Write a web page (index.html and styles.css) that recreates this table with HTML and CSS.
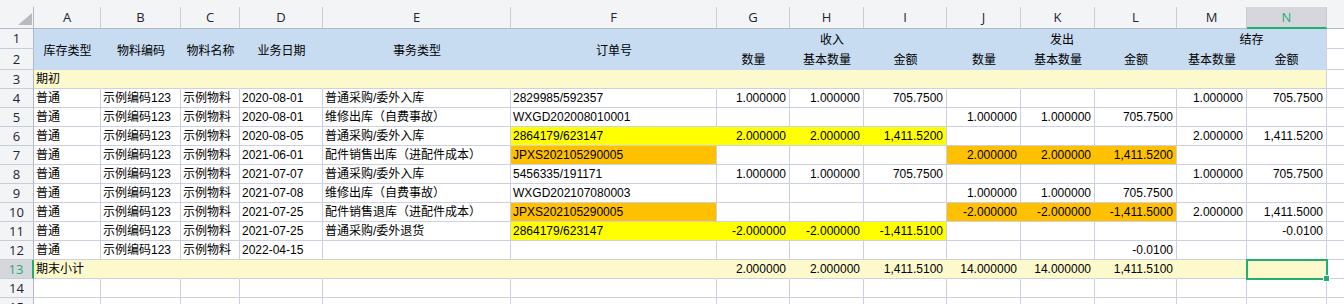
FILE: index.html
```html
<!DOCTYPE html>
<html lang="zh-CN">
<head>
<meta charset="utf-8">
<title>Sheet</title>
<link rel="stylesheet" href="styles.css">
</head>
<body>
<div class="sheet">
  <div class="colhdr">
    <div class="corner"><span class="tri"></span></div>
    <div class="ch a">A</div><div class="ch b">B</div><div class="ch c">C</div><div class="ch d">D</div><div class="ch e">E</div><div class="ch f">F</div><div class="ch g">G</div><div class="ch h">H</div><div class="ch i">I</div><div class="ch j">J</div><div class="ch k">K</div><div class="ch l">L</div><div class="ch m">M</div><div class="ch n sel">N</div><div class="ch o blank"></div>
  </div>

  <div class="hblock">
    <div class="rhstack"><div class="rh r1">1</div><div class="rh r2">2</div></div>
    <div class="hc a">库存类型</div>
    <div class="hc b">物料编码</div>
    <div class="hc c">物料名称</div>
    <div class="hc d">业务日期</div>
    <div class="hc e">事务类型</div>
    <div class="hc f">订单号</div>
    <div class="grp ghi">
      <div class="gt">收入</div>
      <div class="gs"><div class="sc g">数量</div><div class="sc h">基本数量</div><div class="sc i">金额</div></div>
    </div>
    <div class="grp gjl">
      <div class="gt">发出</div>
      <div class="gs"><div class="sc j">数量</div><div class="sc k">基本数量</div><div class="sc l">金额</div></div>
    </div>
    <div class="grp gmn">
      <div class="gt">结存</div>
      <div class="gs"><div class="sc m">基本数量</div><div class="sc n">金额</div></div>
    </div>
    <div class="ostack"><div class="o1"></div><div class="o2"></div></div>
  </div>

  <div class="row">
    <div class="rh">3</div>
    <div class="cell a yl nr">期初</div><div class="cell b yl nr"></div><div class="cell c yl nr"></div><div class="cell d yl nr"></div><div class="cell e yl nr"></div><div class="cell f yl nr"></div><div class="cell g yl nr"></div><div class="cell h yl nr"></div><div class="cell i yl nr"></div><div class="cell j yl nr"></div><div class="cell k yl nr"></div><div class="cell l yl nr"></div><div class="cell m yl nr"></div><div class="cell n yl"></div><div class="cell o"></div>
  </div>

  <div class="row">
    <div class="rh">4</div>
    <div class="cell a">普通</div><div class="cell b">示例编码123</div><div class="cell c">示例物料</div><div class="cell d">2020-08-01</div><div class="cell e">普通采购/委外入库</div><div class="cell f">2829985/592357</div>
    <div class="cell g num">1.000000</div><div class="cell h num">1.000000</div><div class="cell i num">705.7500</div><div class="cell j num"></div><div class="cell k num"></div><div class="cell l num"></div><div class="cell m num">1.000000</div><div class="cell n num">705.7500</div><div class="cell o"></div>
  </div>

  <div class="row">
    <div class="rh">5</div>
    <div class="cell a">普通</div><div class="cell b">示例编码123</div><div class="cell c">示例物料</div><div class="cell d">2020-08-01</div><div class="cell e">维修出库（自费事故）</div><div class="cell f">WXGD202008010001</div>
    <div class="cell g num"></div><div class="cell h num"></div><div class="cell i num"></div><div class="cell j num">1.000000</div><div class="cell k num">1.000000</div><div class="cell l num">705.7500</div><div class="cell m num"></div><div class="cell n num"></div><div class="cell o"></div>
  </div>

  <div class="row">
    <div class="rh">6</div>
    <div class="cell a">普通</div><div class="cell b">示例编码123</div><div class="cell c">示例物料</div><div class="cell d">2020-08-05</div><div class="cell e">普通采购/委外入库</div><div class="cell f ye nr">2864179/623147</div>
    <div class="cell g num ye nr">2.000000</div><div class="cell h num ye nr">2.000000</div><div class="cell i num ye">1,411.5200</div><div class="cell j num"></div><div class="cell k num"></div><div class="cell l num"></div><div class="cell m num">2.000000</div><div class="cell n num">1,411.5200</div><div class="cell o"></div>
  </div>

  <div class="row">
    <div class="rh">7</div>
    <div class="cell a">普通</div><div class="cell b">示例编码123</div><div class="cell c">示例物料</div><div class="cell d">2021-06-01</div><div class="cell e">配件销售出库（进配件成本）</div><div class="cell f or">JPXS202105290005</div>
    <div class="cell g num"></div><div class="cell h num"></div><div class="cell i num"></div><div class="cell j num or nr">2.000000</div><div class="cell k num or nr">2.000000</div><div class="cell l num or">1,411.5200</div><div class="cell m num"></div><div class="cell n num"></div><div class="cell o"></div>
  </div>

  <div class="row">
    <div class="rh">8</div>
    <div class="cell a">普通</div><div class="cell b">示例编码123</div><div class="cell c">示例物料</div><div class="cell d">2021-07-07</div><div class="cell e">普通采购/委外入库</div><div class="cell f">5456335/191171</div>
    <div class="cell g num">1.000000</div><div class="cell h num">1.000000</div><div class="cell i num">705.7500</div><div class="cell j num"></div><div class="cell k num"></div><div class="cell l num"></div><div class="cell m num">1.000000</div><div class="cell n num">705.7500</div><div class="cell o"></div>
  </div>

  <div class="row">
    <div class="rh">9</div>
    <div class="cell a">普通</div><div class="cell b">示例编码123</div><div class="cell c">示例物料</div><div class="cell d">2021-07-08</div><div class="cell e">维修出库（自费事故）</div><div class="cell f">WXGD202107080003</div>
    <div class="cell g num"></div><div class="cell h num"></div><div class="cell i num"></div><div class="cell j num">1.000000</div><div class="cell k num">1.000000</div><div class="cell l num">705.7500</div><div class="cell m num"></div><div class="cell n num"></div><div class="cell o"></div>
  </div>

  <div class="row">
    <div class="rh">10</div>
    <div class="cell a">普通</div><div class="cell b">示例编码123</div><div class="cell c">示例物料</div><div class="cell d">2021-07-25</div><div class="cell e">配件销售退库（进配件成本）</div><div class="cell f or">JPXS202105290005</div>
    <div class="cell g num"></div><div class="cell h num"></div><div class="cell i num"></div><div class="cell j num or nr">-2.000000</div><div class="cell k num or nr">-2.000000</div><div class="cell l num or">-1,411.5000</div><div class="cell m num">2.000000</div><div class="cell n num">1,411.5000</div><div class="cell o"></div>
  </div>

  <div class="row">
    <div class="rh">11</div>
    <div class="cell a">普通</div><div class="cell b">示例编码123</div><div class="cell c">示例物料</div><div class="cell d">2021-07-25</div><div class="cell e">普通采购/委外退货</div><div class="cell f ye nr">2864179/623147</div>
    <div class="cell g num ye nr">-2.000000</div><div class="cell h num ye nr">-2.000000</div><div class="cell i num ye">-1,411.5100</div><div class="cell j num"></div><div class="cell k num"></div><div class="cell l num"></div><div class="cell m num"></div><div class="cell n num">-0.0100</div><div class="cell o"></div>
  </div>

  <div class="row">
    <div class="rh">12</div>
    <div class="cell a">普通</div><div class="cell b">示例编码123</div><div class="cell c">示例物料</div><div class="cell d">2022-04-15</div><div class="cell e"></div><div class="cell f"></div>
    <div class="cell g num"></div><div class="cell h num"></div><div class="cell i num"></div><div class="cell j num"></div><div class="cell k num"></div><div class="cell l num">-0.0100</div><div class="cell m num"></div><div class="cell n num"></div><div class="cell o"></div>
  </div>

  <div class="row">
    <div class="rh sel">13</div>
    <div class="cell a yl nr">期末小计</div><div class="cell b yl nr"></div><div class="cell c yl nr"></div><div class="cell d yl nr"></div><div class="cell e yl nr"></div><div class="cell f yl nr"></div>
    <div class="cell g num yl nr">2.000000</div><div class="cell h num yl nr">2.000000</div><div class="cell i num yl nr">1,411.5100</div><div class="cell j num yl nr">14.000000</div><div class="cell k num yl nr">14.000000</div><div class="cell l num yl nr">1,411.5100</div><div class="cell m num yl nr"></div><div class="cell n num yl active"></div><div class="cell o"></div>
  </div>

  <div class="row">
    <div class="rh">14</div>
    <div class="cell a"></div><div class="cell b"></div><div class="cell c"></div><div class="cell d"></div><div class="cell e"></div><div class="cell f"></div><div class="cell g"></div><div class="cell h"></div><div class="cell i"></div><div class="cell j"></div><div class="cell k"></div><div class="cell l"></div><div class="cell m"></div><div class="cell n"></div><div class="cell o"></div>
  </div>

  <div class="row">
    <div class="rh">15</div>
    <div class="cell a"></div><div class="cell b"></div><div class="cell c"></div><div class="cell d"></div><div class="cell e"></div><div class="cell f"></div><div class="cell g"></div><div class="cell h"></div><div class="cell i"></div><div class="cell j"></div><div class="cell k"></div><div class="cell l"></div><div class="cell m"></div><div class="cell n"></div><div class="cell o"></div>
  </div>
</div>
</body>
</html>
```

FILE: styles.css
```css
:root {
  --grid: #ccd0e0;
  --hdr: #f3f4f6;
  --hdr-sel: #d5d7dd;
  --hdr-line: #c9ccd6;
  --hdr-edge: #b3b8c8;
  --green: #21b06f;
  --blue: #c7dbf1;
  --lyellow: #fcfacd;
  --yellow: #ffff00;
  --orange: #ffc000;
}

html, body {
  margin: 0;
  padding: 0;
  background: #ffffff;
}

body {
  overflow: hidden;
  font-family: "Liberation Sans", "Noto Sans CJK SC", sans-serif;
  font-size: 12px;
  color: #000000;
}

.sheet {
  width: 1344px;
  height: 304px;
  overflow: hidden;
}

/* column widths (border included) */
.a { width: 67px; }
.b { width: 80px; }
.c { width: 59px; }
.d { width: 83px; }
.e { width: 188px; }
.f { width: 206px; }
.g { width: 73px; }
.h { width: 74px; }
.i { width: 83px; }
.j { width: 74px; }
.k { width: 74px; }
.l { width: 82px; }
.m { width: 70px; }
.n { width: 80px; }
.o { width: 17px; }

/* column header */
.colhdr {
  display: flex;
  align-items: flex-end;
  height: 29px;
  background: var(--hdr);
}

.corner {
  flex: none;
  box-sizing: border-box;
  width: 34px;
  height: 22px;
  border-right: 1px solid var(--hdr-edge);
  border-bottom: 1px solid var(--hdr-edge);
  display: flex;
  justify-content: flex-end;
  align-items: flex-end;
  padding: 0 1px 3px 0;
}

.tri {
  width: 0;
  height: 0;
  border-left: 14px solid transparent;
  border-bottom: 12px solid #b7babf;
}

.ch {
  flex: none;
  box-sizing: border-box;
  height: 22px;
  border-right: 1px solid var(--hdr-line);
  border-bottom: 1px solid var(--hdr-edge);
  font-family: "Open Sans", "Noto Sans", sans-serif;
  font-size: 13px;
  line-height: 20px;
  text-align: center;
  color: #1e2330;
}

.ch.blank {
  border-right: none;
}

.ch.sel {
  background: var(--hdr-sel);
  color: var(--green);
  border-bottom: 2px solid var(--green);
}

/* row header */
.rh {
  flex: none;
  box-sizing: border-box;
  width: 34px;
  height: 19px;
  background: var(--hdr);
  border-right: 1px solid var(--hdr-edge);
  border-bottom: 1px solid var(--hdr-line);
  font-family: "Open Sans", "Noto Sans", sans-serif;
  font-size: 13px;
  line-height: 18px;
  text-align: center;
  color: #1e2330;
}

.rh.sel {
  background: var(--hdr-sel);
  color: var(--green);
  border-right: 2px solid var(--green);
}

/* header block rows 1-2 */
.hblock {
  display: flex;
  height: 41px;
}

.rhstack {
  display: flex;
  flex-direction: column;
}

.rh.r1 { height: 20px; line-height: 19px; }
.rh.r2 { height: 21px; line-height: 20px; }

.hc {
  flex: none;
  box-sizing: border-box;
  height: 41px;
  background: var(--blue);
  display: flex;
  align-items: center;
  justify-content: center;
  padding-bottom: 1px;
  white-space: nowrap;
}

.grp {
  flex: none;
  display: flex;
  flex-direction: column;
  background: var(--blue);
  box-sizing: border-box;
}

.ghi { width: 230px; }
.gjl { width: 230px; }
.gmn { width: 150px; border-right: 1px solid var(--grid); }

.gt {
  height: 20px;
  display: flex;
  align-items: flex-end;
  justify-content: center;
  line-height: 18px;
}

.gs {
  display: flex;
  height: 21px;
}

.sc {
  flex: none;
  box-sizing: border-box;
  height: 21px;
  display: flex;
  align-items: flex-end;
  justify-content: center;
  line-height: 18px;
  padding-bottom: 1px;
}

.gmn .sc.n { width: 79px; }

.ostack {
  flex: none;
  width: 17px;
  display: flex;
  flex-direction: column;
}

.o1 { box-sizing: border-box; height: 20px; border-bottom: 1px solid var(--grid); }
.o2 { box-sizing: border-box; height: 21px; border-bottom: 1px solid var(--grid); }

/* body rows */
.row {
  display: flex;
  height: 19px;
}

.cell {
  flex: none;
  box-sizing: border-box;
  height: 19px;
  border-right: 1px solid var(--grid);
  border-bottom: 1px solid var(--grid);
  line-height: 18px;
  padding: 0 2px;
  white-space: nowrap;
  overflow: hidden;
}

.cell.o {
  border-right: none;
}

.num {
  text-align: right;
  padding: 0 3px 0 2px;
}

.yl { background: var(--lyellow); }
.ye { background: var(--yellow); }
.or { background: var(--orange); }
.nr { border-right-color: transparent; }

.active {
  position: relative;
  z-index: 2;
  overflow: visible;
  outline: 2px solid var(--green);
  outline-offset: -1px;
}

.active::after {
  content: "";
  position: absolute;
  right: -4px;
  bottom: -4px;
  width: 5px;
  height: 5px;
  background: var(--green);
  border: 1px solid #ffffff;
}
```
